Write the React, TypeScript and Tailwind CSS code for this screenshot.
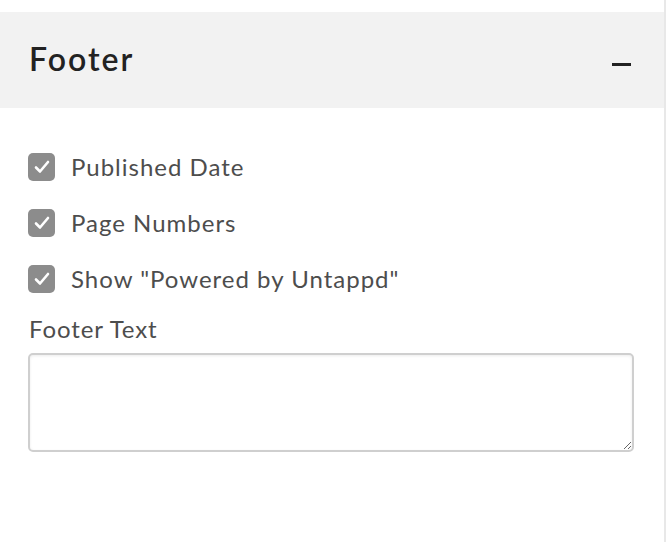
import React from "react";

function Check({ label }: { label: string }) {
  return (
    <label className="flex items-center h-[28px] gap-[16px]">
      <span className="w-[27px] h-[28px] rounded-[5px] bg-[#8c8c8c] flex items-center justify-center">
        <svg width="20" height="20" viewBox="0 0 20 20" fill="none">
          <path d="M4 10.5 L8 14.5 L16 5" stroke="#ffffff" strokeWidth="2.6" strokeLinecap="round" strokeLinejoin="round" />
        </svg>
      </span>
      <span className="text-[24px] text-[#4d4d4d] tracking-[1px] leading-none">{label}</span>
    </label>
  );
}

export default function App() {
  return (
    <div className="w-[666px] h-[542px] bg-white flex font-['Lato',sans-serif]">
      <div className="flex-1 pt-[12px]">
        <div className="h-[96px] bg-[#f2f2f2] flex items-center justify-between pl-[29px] pr-[33px]">
          <span className="text-[32px] font-semibold text-[#222] leading-none pb-[3px] tracking-[2px]">Footer</span>
          <span className="w-[19px] h-[3px] bg-[#222] mt-[8px]" />
        </div>
        <div className="pl-[28px] pr-[30px] pt-[45px] flex flex-col">
          <div className="flex flex-col gap-[28px]">
            <Check label="Published Date" />
            <Check label="Page Numbers" />
            <Check label={'Show "Powered by Untappd"'} />
          </div>
          <div className="mt-[21px] text-[24px] text-[#4d4d4d] leading-[30px] pl-[1px] tracking-[0.9px]">Footer Text</div>
          <textarea className="mt-[9px] h-[99px] w-full border-2 border-[#cfcfcf] rounded-[5px] shadow-[inset_0_1px_3px_rgba(0,0,0,0.08)] resize-y" />
        </div>
      </div>
      <div className="w-[2px] bg-[#e8e8e8]" />
    </div>
  );
}
